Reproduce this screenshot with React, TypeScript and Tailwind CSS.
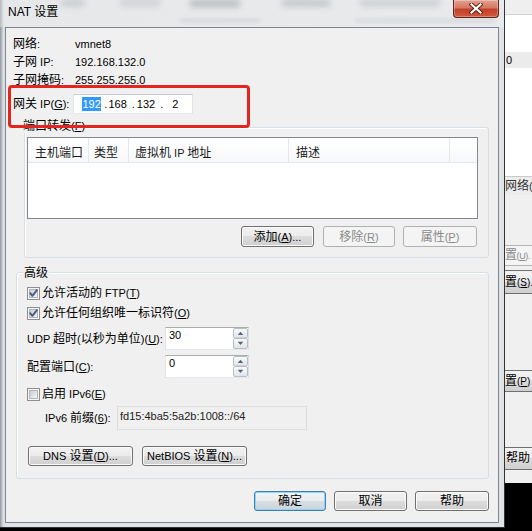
import React from "react";

const CJK = /([\u2E80-\u9FFF\u3000-\u303F\uFF00-\uFFEF]+)/;

function T({ s }: { s: string }) {
  const parts = s.split(CJK);
  return (
    <>
      {parts.map((p, i) =>
        p === "" ? null : CJK.test(p) ? (
          <span key={i} className="text-[12px]">
            {p}
          </span>
        ) : (
          <React.Fragment key={i}>{p}</React.Fragment>
        )
      )}
    </>
  );
}

function M({ a, k, b }: { a: string; k: string; b: string }) {
  return (
    <>
      <T s={a} />
      <span className="underline decoration-1 underline-offset-[1px]">{k}</span>
      <T s={b} />
    </>
  );
}

type Kind = "normal" | "disabled" | "default";

function Btn({ cls, kind = "normal", children }: { cls: string; kind?: Kind; children: React.ReactNode }) {
  const k =
    kind === "disabled"
      ? "border-[#adb2b5] bg-[#f4f4f4] text-[#8a8a8a]"
      : kind === "default"
      ? "border-[#3c7fb1] bg-[linear-gradient(to_bottom,#f1f4f6_0%,#e9edf0_49%,#d9dfe4_50%,#cbd3d9_100%)] shadow-[inset_0_0_0_1px_#8fd6f6] text-black"
      : "border-[#707070] bg-[linear-gradient(to_bottom,#f2f2f2_0%,#ebebeb_49%,#dddddd_50%,#cfcfcf_100%)] shadow-[inset_0_0_0_1px_#fbfbfb] text-black";
  return (
    <div className={`${cls} shrink-0 rounded-[3px] border flex items-center justify-center leading-[14px] whitespace-nowrap ${k}`}>
      <span>{children}</span>
    </div>
  );
}

function Check({ on, id }: { on: boolean; id: string }) {
  return (
    <svg width="13" height="13" viewBox="0 0 13 13" className="shrink-0">
      <defs>
        <linearGradient id={id} x1="0" y1="0" x2="1" y2="1">
          <stop offset="0" stopColor="#c6cad0" />
          <stop offset="1" stopColor="#f7f7f7" />
        </linearGradient>
      </defs>
      <rect x="0.5" y="0.5" width="12" height="12" fill="#f6f6f6" stroke="#8e8f8f" />
      <rect x="2.5" y="2.5" width="8" height="8" fill={`url(#${id})`} stroke="#b3b7bd" />
      {on && (
        <path d="M3.2 6.2 L5.4 8.8 L9.9 3.2" fill="none" stroke="#4a5d8e" strokeWidth="2" strokeLinecap="round" strokeLinejoin="round" />
      )}
    </svg>
  );
}

function Spin({ v, id }: { v: string; id: string }) {
  return (
    <div className="w-[84px] h-[23px] shrink-0 bg-white border border-[#abadb3] border-l-[#e2e3ea] border-r-[#dbdfe6] border-b-[#e3e9ef] flex">
      <span className="flex-1 pl-[3px] leading-[14px]">{v}</span>
      <svg width="15" height="21" viewBox="0 0 15 21" className="shrink-0">
        <defs>
          <linearGradient id={id} x1="0" y1="0" x2="0" y2="1">
            <stop offset="0" stopColor="#fafafa" />
            <stop offset="1" stopColor="#e1e3e6" />
          </linearGradient>
        </defs>
        <rect x="0.5" y="0.5" width="14" height="9.5" rx="1.5" fill={`url(#${id})`} stroke="#b9bec5" />
        <rect x="0.5" y="10.5" width="14" height="10" rx="1.5" fill={`url(#${id})`} stroke="#b9bec5" />
        <path d="M4.8 7 L7.5 3.8 L10.2 7 Z" fill="#4d6185" />
        <path d="M4.8 13.8 L7.5 17 L10.2 13.8 Z" fill="#4d6185" />
      </svg>
    </div>
  );
}

function InfoRow({ label, value }: { label: string; value: string }) {
  return (
    <div className="flex items-center h-[18px]">
      <span className="w-[62px] shrink-0">
        <T s={label} />
      </span>
      <span>{value}</span>
    </div>
  );
}

function Head({ cls, s }: { cls: string; s: string }) {
  return (
    <div className={`${cls} shrink-0 border-r border-[#e3e8ee] flex items-end pb-[2px] whitespace-nowrap`}>
      <span>
        <T s={s} />
      </span>
    </div>
  );
}

export default function App() {
  return (
    <div className="w-[532px] h-[531px] bg-black flex items-start overflow-hidden font-['Liberation_Sans','Noto_Sans_CJK_SC',sans-serif] text-[11px] leading-[14px] text-black">
      {/* dialog window */}
      <div className="relative w-[505px] h-[528px] shrink-0 flex flex-col border-r border-b border-[#2f3438] bg-[linear-gradient(to_right,#8f969d_0px,#d6dade_3px,#e1e4e7_5px)]">
        {/* title bar */}
        <div className="relative h-[27px] shrink-0 flex items-start bg-[linear-gradient(to_right,#b5babf_0px,#e6e8ea_4px,#e8eaec_100%)]">
          <div className="absolute left-[62px] top-[0px] w-[22px] h-[6px] bg-[#8d9297] opacity-40 blur-[3px]" />
          <div className="absolute left-[120px] top-[0px] w-[40px] h-[6px] bg-[#8d9297] opacity-30 blur-[3px]" />
          <div className="absolute left-[190px] top-[0px] w-[50px] h-[7px] bg-[#7f8489] opacity-45 blur-[3px]" />
          <div className="absolute left-[282px] top-[0px] w-[48px] h-[6px] bg-[#7f8489] opacity-40 blur-[3px]" />
          <div className="absolute left-[360px] top-[0px] w-[80px] h-[6px] bg-[#8d9297] opacity-35 blur-[3px]" />
          <div className="absolute left-[180px] top-[19px] w-[80px] h-[3px] bg-[#9aa0a5] opacity-30 blur-[2px]" />
          <div className="absolute left-[355px] top-[19px] w-[140px] h-[3px] bg-[#9aa0a5] opacity-30 blur-[2px]" />
          <span className="relative ml-[8px] mt-[5px] text-[12px] leading-[15px]">
            NAT <span className="text-[12px]">设置</span>
          </span>
          <div className="flex-1" />
          <div className="relative mr-[5px] w-[46px] h-[18px] shrink-0 rounded-b-[4px] border border-t-0 border-[#5b231b] bg-[linear-gradient(to_bottom,#e2a191_0%,#d67864_45%,#c2412a_55%,#d0583c_100%)] shadow-[inset_0_0_0_1px_rgba(255,255,255,0.3)] flex items-center justify-center pb-[1px]">
            <svg width="14" height="11" viewBox="0 0 14 11">
              <path d="M2.5 1.5 L11.5 9.5 M11.5 1.5 L2.5 9.5" stroke="#5a1a10" strokeWidth="4" strokeLinecap="square" />
              <path d="M2.5 1.5 L11.5 9.5 M11.5 1.5 L2.5 9.5" stroke="#ffffff" strokeWidth="2.2" strokeLinecap="square" />
            </svg>
          </div>
        </div>

        {/* client area */}
        <div className="ml-[5px] w-[494px] h-[496px] shrink-0 border border-[#7a8591] bg-[#f0f0f0] flex flex-col">
          <div className="flex flex-col pl-[7px] pt-[7px]">
            <InfoRow label="网络:" value="vmnet8" />
            <InfoRow label="子网 IP:" value="192.168.132.0" />
            <InfoRow label="子网掩码:" value="255.255.255.0" />
            <div className="flex items-center h-[20px] mt-[5px]">
              <span className="w-[60px] shrink-0">
                <M a="网关 IP(" k="G" b="):" />
              </span>
              <div className="w-[120px] h-[20px] shrink-0 bg-white border border-[#c9ccd2] border-l-[#e2e3ea] border-r-[#e2e3ea] border-b-[#e8ecf0] flex items-center pl-[8px]">
                <span className="bg-[#3399ff] text-white px-[0.5px] leading-[14px]">192</span>
                <span className="ml-[3px]">.</span>
                <span className="ml-[1px]">168</span>
                <span className="ml-[5px]">.</span>
                <span className="ml-[2px]">132</span>
                <span className="ml-[5px]">.</span>
                <span className="ml-[9px]">2</span>
              </div>
            </div>
          </div>

          {/* port forwarding group */}
          <div className="relative ml-[18px] mt-[13px] w-[465px] h-[131px] shrink-0 rounded-[3px] border border-[#d5dfe5] shadow-[inset_1px_1px_0_#ffffff] flex flex-col pl-[2px] pt-[9px]">
            <span className="absolute left-[-2px] -top-[9px] bg-[#f0f0f0] pr-[1px] leading-[14px]">
              <M a="端口转发(" k="F" b=")" />
            </span>
            <div className="w-[451px] h-[82px] shrink-0 border border-[#828790] bg-white flex flex-col">
              <div className="flex h-[25px] shrink-0 border-b border-[#e5e8eb] bg-[linear-gradient(to_bottom,#ffffff,#f7f8f9)] text-[#1a1a1a]">
                <Head cls="w-[61px] pl-[7px]" s="主机端口" />
                <Head cls="w-[40px] pl-[5px]" s="类型" />
                <Head cls="w-[160px] pl-[6px]" s="虚拟机 IP 地址" />
                <Head cls="w-[161px] pl-[7px]" s="描述" />
                <div className="flex-1" />
              </div>
            </div>
            <div className="flex justify-end mt-[7px] pr-[11px]">
              <Btn cls="w-[73px] h-[21px]">
                <M a="添加(" k="A" b=")..." />
              </Btn>
              <Btn cls="w-[72px] h-[21px] ml-[9px]" kind="disabled">
                <M a="移除(" k="R" b=")" />
              </Btn>
              <Btn cls="w-[74px] h-[21px] ml-[8px]" kind="disabled">
                <M a="属性(" k="P" b=")" />
              </Btn>
            </div>
          </div>

          {/* advanced group */}
          <div className="relative ml-[10px] mt-[14px] w-[473px] h-[207px] shrink-0 rounded-[3px] border border-[#d5dfe5] shadow-[inset_1px_1px_0_#ffffff] flex flex-col pl-[10px] pt-[10px]">
            <span className="absolute left-[6px] -top-[7px] bg-[#f0f0f0] px-[1px] leading-[14px]">
              <T s="高级" />
            </span>
            <div className="flex items-center h-[20px]">
              <Check on id="c1" />
              <span className="ml-[2px]">
                <M a="允许活动的 FTP(" k="T" b=")" />
              </span>
            </div>
            <div className="flex items-center h-[20px]">
              <Check on id="c2" />
              <span className="ml-[2px]">
                <M a="允许任何组织唯一标识符(" k="O" b=")" />
              </span>
            </div>
            <div className="flex items-center h-[23px] mt-[4px]">
              <span className="w-[138px] shrink-0 whitespace-nowrap">
                <M a="UDP 超时(以秒为单位)(" k="U" b="):" />
              </span>
              <Spin v="30" id="s1" />
            </div>
            <div className="flex items-center h-[23px] mt-[5px]">
              <span className="w-[138px] shrink-0">
                <M a="配置端口(" k="C" b="):" />
              </span>
              <Spin v="0" id="s2" />
            </div>
            <div className="flex items-center h-[20px] mt-[6px]">
              <Check on={false} id="c3" />
              <span className="ml-[2px]">
                <M a="启用 IPv6(" k="E" b=")" />
              </span>
            </div>
            <div className="flex items-center h-[24px] mt-[2px]">
              <span className="ml-[18px] w-[72px] shrink-0 whitespace-nowrap">
                <M a="IPv6 前缀(" k="6" b="):" />
              </span>
              <div className="w-[190px] h-[24px] shrink-0 border border-[#dadde1] bg-[#f0f0f0] pl-[2px] pt-[2px] leading-[14px] text-[#222222]">
                fd15:4ba5:5a2b:1008::/64
              </div>
            </div>
            <div className="flex items-center h-[20px] mt-[16px] ml-[1px] gap-[9px]">
              <Btn cls="w-[105px] h-[20px]">
                <M a="DNS 设置(" k="D" b=")..." />
              </Btn>
              <Btn cls="w-[105px] h-[20px]">
                <M a="NetBIOS 设置(" k="N" b=")..." />
              </Btn>
            </div>
          </div>

          {/* bottom buttons */}
          <div className="flex justify-end gap-[8px] pr-[9px] mt-[12px]">
            <Btn cls="w-[72px] h-[20px]" kind="default">
              <T s="确定" />
            </Btn>
            <Btn cls="w-[73px] h-[20px]">
              <T s="取消" />
            </Btn>
            <Btn cls="w-[74px] h-[20px]">
              <T s="帮助" />
            </Btn>
          </div>
        </div>

        {/* red annotation box */}
        <div className="absolute left-[8px] top-[85px] w-[242px] h-[43px] border-[3px] border-[#e3261f] rounded-[4px] pointer-events-none" />
      </div>

      {/* background window strip */}
      <div className="w-[27px] h-[483px] shrink-0 bg-white flex flex-col overflow-hidden whitespace-nowrap">
        <div className="h-[15px] shrink-0 bg-[#efefef] border-b border-[#d2d2d2]" />
        <div className="h-[37px] shrink-0" />
        <div className="h-[16px] shrink-0 bg-[#ebebeb] pl-[1px] leading-[16px]">0</div>
        <div className="h-[108px] shrink-0" />
        <div className="h-[19px] shrink-0 border-t border-[#c9c9c9] bg-[#ececec] leading-[18px] text-[#333333]">
          <T s="网络(" />
        </div>
        <div className="flex-1 bg-[#f0f0f0] flex flex-col">
          <div className="h-[50px] shrink-0" />
          <div className="h-[21px] shrink-0 border-y border-[#b4b4b4] bg-[#f4f4f4] text-[#8a8a8a] leading-[19px] text-[9px] tracking-[-0.4px]">
            <M a="置(" k="U" b=")." />
          </div>
          <div className="h-[4px] shrink-0" />
          <div className="h-[24px] shrink-0 border-y border-[#707070] bg-[linear-gradient(to_bottom,#f2f2f2_0%,#ebebeb_49%,#dddddd_50%,#cfcfcf_100%)] leading-[22px] text-[10px]">
            <M a="置(" k="S" b=")." />
          </div>
          <div className="h-[76px] shrink-0" />
          <div className="h-[22px] shrink-0 border-y border-[#707070] bg-[linear-gradient(to_bottom,#f2f2f2_0%,#ebebeb_49%,#dddddd_50%,#cfcfcf_100%)] leading-[20px] text-[10px]">
            <M a="置(" k="P" b=")" />
          </div>
          <div className="h-[55px] shrink-0" />
          <div className="h-[23px] shrink-0 border-y border-[#707070] bg-[linear-gradient(to_bottom,#f2f2f2_0%,#ebebeb_49%,#dddddd_50%,#cfcfcf_100%)] leading-[21px] pl-[1px]">
            <T s="帮助" />
          </div>
        </div>
      </div>
    </div>
  );
}
